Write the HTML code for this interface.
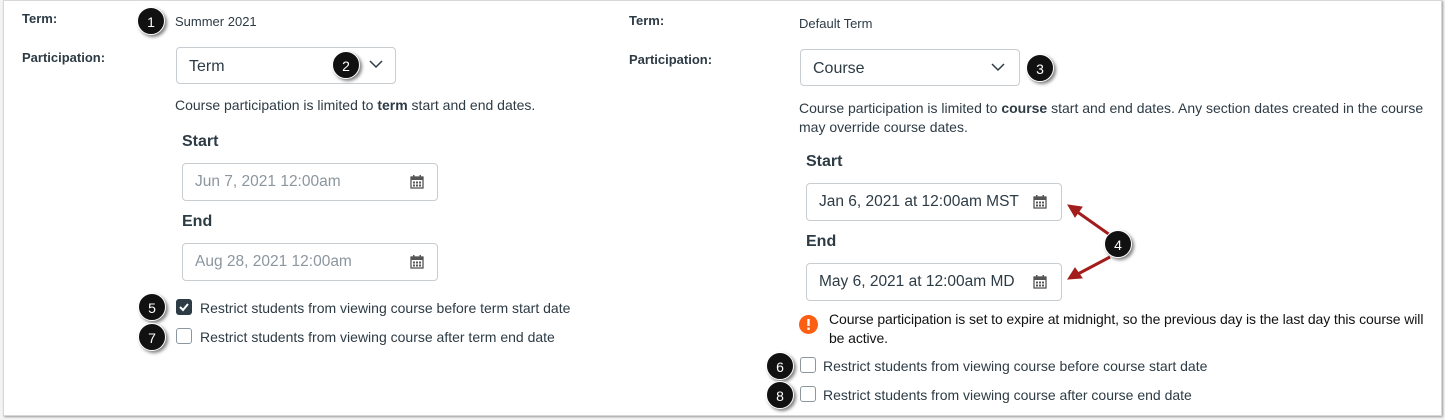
<!DOCTYPE html>
<html><head><meta charset="utf-8"><style>
*{margin:0;padding:0;box-sizing:border-box}
body{width:1445px;height:420px;background:#f4f4f4;position:relative;overflow:hidden;font-family:"Liberation Sans",sans-serif;color:#2d3b45}
.card{position:absolute;left:3px;top:0;width:1439px;height:416px;background:#fff;border:1px solid #d8d8d8;box-shadow:1px 1px 2px #999}
.a{position:absolute;white-space:nowrap}
.lbl{font-size:13px;font-weight:bold}
.v{font-size:13px}
.sel{position:absolute;width:220px;height:37px;border:1px solid #c7cdd1;border-radius:4px;font-size:16px;padding:10px 12px;background:#fff}
.inp{position:absolute;width:256px;height:38px;border:1px solid #c7cdd1;border-radius:4px;font-size:15.5px;padding:9px 12px;background:#fff}
.h{font-size:16px;font-weight:bold}
.t{font-size:14px}
.b{position:absolute;width:28px;height:28px;border-radius:50%;background:#111;color:#fff;font-size:14px;text-align:center;line-height:28px;box-shadow:2px 2px 3px rgba(0,0,0,.5);border:1px solid #fff}
.cb{position:absolute;width:16px;height:16px;border:1px solid #8b969e;border-radius:3px;background:#fff}
.cal{position:absolute;width:14px;height:14px}
</style></head><body>
<div class="card"></div>
<svg width="0" height="0" style="position:absolute"><defs><g id="cal"><rect x="1" y="2" width="12" height="11" fill="none" stroke="#555" stroke-width="1.3"/><rect x="1" y="2" width="12" height="3" fill="#555"/><rect x="3" y="0" width="1.5" height="3" fill="#555"/><rect x="9.5" y="0" width="1.5" height="3" fill="#555"/><g fill="#555"><rect x="3" y="6.5" width="2" height="2"/><rect x="6" y="6.5" width="2" height="2"/><rect x="9" y="6.5" width="2" height="2"/><rect x="3" y="9.5" width="2" height="2"/><rect x="6" y="9.5" width="2" height="2"/><rect x="9" y="9.5" width="2" height="2"/></g></g></defs></svg>

<div class="a lbl" style="left:22px;top:11px">Term:</div>
<div class="a v" style="left:175px;top:14px">Summer 2021</div>
<div class="b" style="left:137px;top:7px">1</div>
<div class="a lbl" style="left:22px;top:50px">Participation:</div>
<div class="sel" style="left:176px;top:47px">Term</div>
<svg class="a" style="left:369px;top:60px" width="14" height="9"><path d="M1 1 L7 7 L13 1" fill="none" stroke="#2d3b45" stroke-width="1.5"/></svg>
<div class="b" style="left:332px;top:51px">2</div>
<div class="a t" style="left:175px;top:97px">Course participation is limited to <b>term</b> start and end dates.</div>
<div class="a h" style="left:182px;top:133px">Start</div>
<div class="inp" style="left:182px;top:163px;color:#8b969e">Jun 7, 2021 12:00am</div>
<svg class="cal" style="left:410px;top:175px" viewBox="0 0 14 14"><use href="#cal"/></svg>
<div class="a h" style="left:182px;top:213px">End</div>
<div class="inp" style="left:182px;top:243px;color:#8b969e">Aug 28, 2021 12:00am</div>
<svg class="cal" style="left:410px;top:255px" viewBox="0 0 14 14"><use href="#cal"/></svg>
<div class="cb" style="left:176px;top:299px;background:#2d3b45;border-color:#2d3b45"><svg width="14" height="14" style="position:absolute;left:0;top:0"><path d="M3 7 L6 10 L11 4" fill="none" stroke="#fff" stroke-width="2"/></svg></div>
<div class="a t" style="left:200px;top:300px">Restrict students from viewing course before term start date</div>
<div class="b" style="left:138px;top:293px">5</div>
<div class="cb" style="left:176px;top:328px"></div>
<div class="a t" style="left:200px;top:329px">Restrict students from viewing course after term end date</div>
<div class="b" style="left:138px;top:323px">7</div>

<div class="a lbl" style="left:629px;top:13px">Term:</div>
<div class="a v" style="left:799px;top:16px">Default Term</div>
<div class="a lbl" style="left:629px;top:52px">Participation:</div>
<div class="sel" style="left:800px;top:49px">Course</div>
<svg class="a" style="left:991px;top:63px" width="14" height="9"><path d="M1 1 L7 7 L13 1" fill="none" stroke="#2d3b45" stroke-width="1.5"/></svg>
<div class="b" style="left:1026px;top:54px">3</div>
<div class="a t" style="left:799px;top:99px;line-height:19px;white-space:normal;width:632px">Course participation is limited to <b>course</b> start and end dates. Any section dates created in the course may override course dates.</div>
<div class="a h" style="left:806px;top:153px">Start</div>
<div class="inp" style="left:806px;top:183px">Jan 6, 2021 at 12:00am MST</div>
<svg class="cal" style="left:1033px;top:195px" viewBox="0 0 14 14"><use href="#cal"/></svg>
<div class="a h" style="left:806px;top:233px">End</div>
<div class="inp" style="left:806px;top:263px">May 6, 2021 at 12:00am MD</div>
<svg class="cal" style="left:1033px;top:275px" viewBox="0 0 14 14"><use href="#cal"/></svg>
<svg class="a" style="left:1060px;top:195px" width="60" height="95"><g stroke="#a41d1d" stroke-width="3" fill="#a41d1d"><line x1="50" y1="40" x2="16" y2="16"/><line x1="50" y1="62" x2="16" y2="80"/><path d="M8 10 L22 12 L15 22 Z" stroke-width="1"/><path d="M8 84 L15 73 L22 83 Z" stroke-width="1"/></g></svg>
<div class="b" style="left:1104px;top:230px">4</div>
<svg class="a" style="left:799px;top:315px" width="19" height="19"><circle cx="9.5" cy="9.5" r="9.5" fill="#fc5e13"/><rect x="8.3" y="4" width="2.4" height="7" fill="#fff"/><rect x="8.3" y="12.5" width="2.4" height="2.4" fill="#fff"/></svg>
<div class="a t" style="left:829px;top:310px;line-height:19px;white-space:normal;width:612px;letter-spacing:-0.1px;color:#111">Course participation is set to expire at midnight, so the previous day is the last day this course will be active.</div>
<div class="cb" style="left:800px;top:357px"></div>
<div class="a t" style="left:823px;top:358px">Restrict students from viewing course before course start date</div>
<div class="b" style="left:766px;top:352px">6</div>
<div class="cb" style="left:800px;top:386px"></div>
<div class="a t" style="left:823px;top:387px">Restrict students from viewing course after course end date</div>
<div class="b" style="left:766px;top:381px">8</div>
</body></html>
